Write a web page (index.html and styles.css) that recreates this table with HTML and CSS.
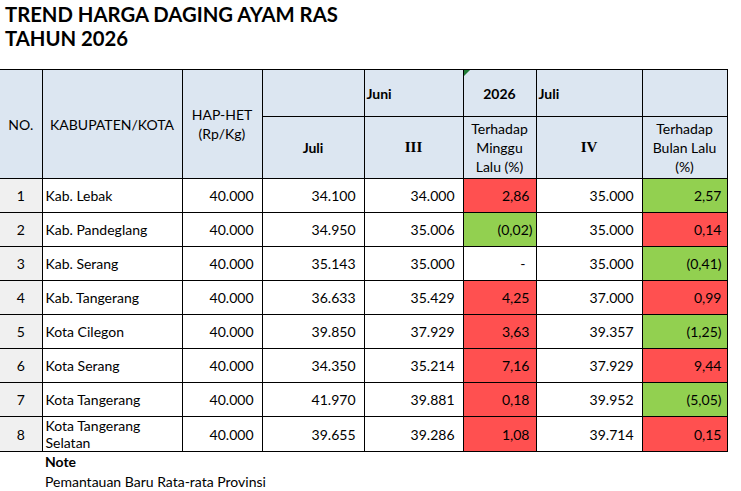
FILE: index.html
```html
<!DOCTYPE html>
<html lang="id">
<head>
<meta charset="utf-8">
<title>Trend Harga Daging Ayam Ras 2026</title>
<link rel="stylesheet" href="styles.css">
</head>
<body>
<div class="sheet">
  <h1 class="title">TREND HARGA DAGING AYAM RAS<br>TAHUN 2026</h1>
  <table class="grid">
    <colgroup>
      <col class="c-no"><col class="c-kab"><col class="c-hap"><col class="c-juli"><col class="c-iii"><col class="c-pct1"><col class="c-iv"><col class="c-pct2">
    </colgroup>
    <thead>
      <tr class="h1">
        <th rowspan="2" class="hd">NO.</th>
        <th rowspan="2" class="hd">KABUPATEN/KOTA</th>
        <th rowspan="2" class="hd">HAP-HET<br>(Rp/Kg)</th>
        <th class="hd"></th>
        <th class="hd left b">Juni</th>
        <th class="hd b mark">2026<span class="tri"></span></th>
        <th class="hd left b">Juli</th>
        <th class="hd"></th>
      </tr>
      <tr class="h2">
        <th class="hd b">Juli</th>
        <th class="hd serif">III</th>
        <th class="hd">Terhadap<br>Minggu<br>Lalu (%)</th>
        <th class="hd serif">IV</th>
        <th class="hd">Terhadap<br>Bulan Lalu<br>(%)</th>
      </tr>
    </thead>
    <tbody>
      <tr><td class="no">1</td><td class="name">Kab. Lebak</td><td class="num">40.000</td><td class="num">34.100</td><td class="num">34.000</td><td class="num p1 red">2,86</td><td class="num">35.000</td><td class="num p2 green">2,57</td></tr>
      <tr><td class="no">2</td><td class="name">Kab. Pandeglang</td><td class="num">40.000</td><td class="num">34.950</td><td class="num">35.006</td><td class="num p1 green paren">(0,02)</td><td class="num">35.000</td><td class="num p2 red">0,14</td></tr>
      <tr><td class="no">3</td><td class="name">Kab. Serang</td><td class="num">40.000</td><td class="num">35.143</td><td class="num">35.000</td><td class="num p1 dash">-</td><td class="num">35.000</td><td class="num p2 green">(0,41)</td></tr>
      <tr><td class="no">4</td><td class="name">Kab. Tangerang</td><td class="num">40.000</td><td class="num">36.633</td><td class="num">35.429</td><td class="num p1 red">4,25</td><td class="num">37.000</td><td class="num p2 red">0,99</td></tr>
      <tr><td class="no">5</td><td class="name">Kota Cilegon</td><td class="num">40.000</td><td class="num">39.850</td><td class="num">37.929</td><td class="num p1 red">3,63</td><td class="num">39.357</td><td class="num p2 green">(1,25)</td></tr>
      <tr><td class="no">6</td><td class="name">Kota Serang</td><td class="num">40.000</td><td class="num">34.350</td><td class="num">35.214</td><td class="num p1 red">7,16</td><td class="num">37.929</td><td class="num p2 red">9,44</td></tr>
      <tr><td class="no">7</td><td class="name">Kota Tangerang</td><td class="num">40.000</td><td class="num">41.970</td><td class="num">39.881</td><td class="num p1 red">0,18</td><td class="num">39.952</td><td class="num p2 green">(5,05)</td></tr>
      <tr><td class="no">8</td><td class="name wrap">Kota Tangerang<br>Selatan</td><td class="num">40.000</td><td class="num">39.655</td><td class="num">39.286</td><td class="num p1 red">1,08</td><td class="num">39.714</td><td class="num p2 red">0,15</td></tr>
    </tbody>
  </table>
  <div class="note">
    <div class="note-title">Note</div>
    <div class="note-text">Pemantauan Baru Rata-rata Provinsi</div>
  </div>
</div>
</body>
</html>
```
FILE: styles.css
```css
html, body {
  margin: 0;
  padding: 0;
  background: #ffffff;
}
.sheet {
  font-family: Lato, "Open Sans", sans-serif;
  color: #000;
  font-size: 14px;
}
.title {
  margin: 0;
  padding: 2px 0 0 5px;
  font-size: 20.3px;
  line-height: 24px;
  font-weight: 700;
  height: 69px;
  box-sizing: border-box;
}
.grid {
  border-collapse: collapse;
  table-layout: fixed;
  width: 727px;
}
.c-no { width: 42px; }
.c-kab { width: 140px; }
.c-hap { width: 80px; }
.c-juli { width: 102px; }
.c-iii { width: 99px; }
.c-pct1 { width: 73px; }
.c-iv { width: 106px; }
.c-pct2 { width: 85px; }
.grid th, .grid td {
  border: 1px solid #000;
  padding: 0;
  line-height: 19px;
}
.grid td:first-child, .grid th:first-child {
  border-left: none;
}
.hd {
  background: #dce6f1;
  font-weight: 400;
  text-align: center;
  vertical-align: middle;
}
.hd.left { text-align: left; padding-left: 2px; }
.hd.b { font-weight: 700; }
.hd.serif {
  font-family: "Liberation Serif", serif;
  font-weight: 700;
  font-size: 15px;
}
.h1 th { height: 46px; }
.h2 th { height: 61px; }
.mark { position: relative; }
.tri {
  position: absolute;
  left: 0;
  top: 0;
  width: 0;
  height: 0;
  border-top: 6px solid #1f7a35;
  border-right: 6px solid transparent;
}
.grid tbody td { height: 33px; vertical-align: middle; }
.no {
  background: #f0f0f0;
  text-align: center;
}
.name { padding-left: 3px !important; }
.name.wrap { line-height: 17px; vertical-align: bottom !important; }
.num { text-align: right; padding-right: 8px !important; }
.p1 { padding-right: 6px !important; }
.p1.paren { padding-right: 3px !important; }
.p1.dash { padding-right: 10px !important; }
.p2 { padding-right: 5px !important; }
.red { background: #ff5050; }
.green { background: #92d050; }
.note {
  padding-left: 45px;
  padding-top: 0;
}
.note-title { font-weight: 700; line-height: 20px; }
.note-text { line-height: 20px; }
```
